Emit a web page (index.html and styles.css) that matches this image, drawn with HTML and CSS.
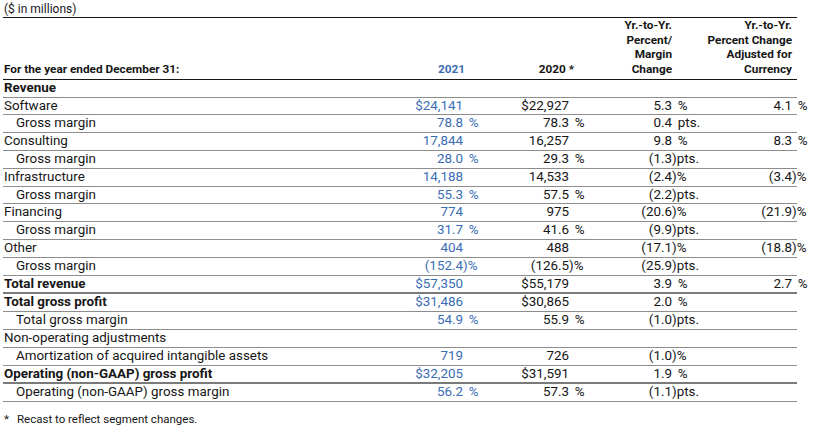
FILE: index.html
```html
<!DOCTYPE html>
<html lang="en">
<head>
<meta charset="utf-8">
<title>Gross profit by segment</title>
<link rel="stylesheet" href="styles.css">
</head>
<body>
<div class="page">
  <div class="units">($ in millions)</div>
  <table class="fin">
    <colgroup>
      <col class="c-label"><col class="c-v1"><col class="c-s1"><col class="c-v2"><col class="c-s2"><col class="c-v3"><col class="c-s3"><col class="c-v4"><col class="c-s4">
    </colgroup>
    <thead>
      <tr class="head">
        <th class="h-label">For the year ended December 31:</th>
        <th class="h-num h-2021" colspan="2">2021</th>
        <th class="h-num h-2020" colspan="2">2020 *</th>
        <th class="h-num h-pct" colspan="2">Yr.-to-Yr.<br>Percent/<br>Margin<br>Change</th>
        <th class="h-num h-cur" colspan="2">Yr.-to-Yr.<br>Percent Change<br>Adjusted for<br>Currency</th>
      </tr>
    </thead>
    <tbody>
      <tr><td class="lbl b sect">Revenue</td><td></td><td></td><td></td><td></td><td></td><td></td><td></td><td></td></tr>
      <tr><td class="lbl">Software</td><td class="v cy">$24,141</td><td class="s"></td><td class="v">$22,927</td><td class="s"></td><td class="v">5.3</td><td class="s sp">&nbsp;%</td><td class="v">4.1</td><td class="s sp">&nbsp;%</td></tr>
      <tr><td class="lbl in">Gross margin</td><td class="v cy">78.8</td><td class="s sp cy">&nbsp;%</td><td class="v">78.3</td><td class="s sp">&nbsp;%</td><td class="v">0.4</td><td class="s sp">&nbsp;pts.</td><td class="v"></td><td class="s"></td></tr>
      <tr><td class="lbl">Consulting</td><td class="v cy">17,844</td><td class="s"></td><td class="v">16,257</td><td class="s"></td><td class="v">9.8</td><td class="s sp">&nbsp;%</td><td class="v">8.3</td><td class="s sp">&nbsp;%</td></tr>
      <tr><td class="lbl in">Gross margin</td><td class="v cy">28.0</td><td class="s sp cy">&nbsp;%</td><td class="v">29.3</td><td class="s sp">&nbsp;%</td><td class="v">(1.3</td><td class="s">)pts.</td><td class="v"></td><td class="s"></td></tr>
      <tr><td class="lbl">Infrastructure</td><td class="v cy">14,188</td><td class="s"></td><td class="v">14,533</td><td class="s"></td><td class="v">(2.4</td><td class="s">)%</td><td class="v">(3.4</td><td class="s">)%</td></tr>
      <tr><td class="lbl in">Gross margin</td><td class="v cy">55.3</td><td class="s sp cy">&nbsp;%</td><td class="v">57.5</td><td class="s sp">&nbsp;%</td><td class="v">(2.2</td><td class="s">)pts.</td><td class="v"></td><td class="s"></td></tr>
      <tr><td class="lbl">Financing</td><td class="v cy">774</td><td class="s"></td><td class="v">975</td><td class="s"></td><td class="v">(20.6</td><td class="s">)%</td><td class="v">(21.9</td><td class="s">)%</td></tr>
      <tr><td class="lbl in">Gross margin</td><td class="v cy">31.7</td><td class="s sp cy">&nbsp;%</td><td class="v">41.6</td><td class="s sp">&nbsp;%</td><td class="v">(9.9</td><td class="s">)pts.</td><td class="v"></td><td class="s"></td></tr>
      <tr><td class="lbl">Other</td><td class="v cy">404</td><td class="s"></td><td class="v">488</td><td class="s"></td><td class="v">(17.1</td><td class="s">)%</td><td class="v">(18.8</td><td class="s">)%</td></tr>
      <tr><td class="lbl in">Gross margin</td><td class="v cy">(152.4</td><td class="s cy">)%</td><td class="v">(126.5</td><td class="s">)%</td><td class="v">(25.9</td><td class="s">)pts.</td><td class="v"></td><td class="s"></td></tr>
      <tr class="thick"><td class="lbl b">Total revenue</td><td class="v cy">$57,350</td><td class="s"></td><td class="v">$55,179</td><td class="s"></td><td class="v">3.9</td><td class="s sp">&nbsp;%</td><td class="v">2.7</td><td class="s sp">&nbsp;%</td></tr>
      <tr><td class="lbl b">Total gross profit</td><td class="v cy">$31,486</td><td class="s"></td><td class="v">$30,865</td><td class="s"></td><td class="v">2.0</td><td class="s sp">&nbsp;%</td><td class="v"></td><td class="s"></td></tr>
      <tr><td class="lbl in">Total gross margin</td><td class="v cy">54.9</td><td class="s sp cy">&nbsp;%</td><td class="v">55.9</td><td class="s sp">&nbsp;%</td><td class="v">(1.0</td><td class="s">)pts.</td><td class="v"></td><td class="s"></td></tr>
      <tr><td class="lbl">Non-operating adjustments</td><td class="v"></td><td class="s"></td><td class="v"></td><td class="s"></td><td class="v"></td><td class="s"></td><td class="v"></td><td class="s"></td></tr>
      <tr><td class="lbl in">Amortization of acquired intangible assets</td><td class="v cy">719</td><td class="s"></td><td class="v">726</td><td class="s"></td><td class="v">(1.0</td><td class="s">)%</td><td class="v"></td><td class="s"></td></tr>
      <tr class="thick"><td class="lbl b">Operating (non-GAAP) gross profit</td><td class="v cy">$32,205</td><td class="s"></td><td class="v">$31,591</td><td class="s"></td><td class="v">1.9</td><td class="s sp">&nbsp;%</td><td class="v"></td><td class="s"></td></tr>
      <tr><td class="lbl in">Operating (non-GAAP) gross margin</td><td class="v cy">56.2</td><td class="s sp cy">&nbsp;%</td><td class="v">57.3</td><td class="s sp">&nbsp;%</td><td class="v">(1.1</td><td class="s">)pts.</td><td class="v"></td><td class="s"></td></tr>
    </tbody>
  </table>
  <div class="note"><span class="star">*</span><span>Recast to reflect segment changes.</span></div>
</div>
</body>
</html>
```

FILE: styles.css
```css
html, body {
  margin: 0;
  padding: 0;
  background: #ffffff;
}

body {
  font-family: Roboto, "Liberation Sans", Arial, sans-serif;
  color: #161616;
}

.page {
  width: 794px;
  margin-left: 3px;
}

.units {
  font-size: 12px;
  line-height: 19px;
  height: 18px;
  padding-left: 1px;
  border-bottom: 1px solid #161616;
  box-sizing: border-box;
}

.fin {
  width: 794px;
  table-layout: fixed;
  border-collapse: separate;
  border-spacing: 0;
}

.c-label { width: 377px; }
.c-v1 { width: 83px; }
.c-s1 { width: 20px; }
.c-v2 { width: 86px; }
.c-s2 { width: 21px; }
.c-v3 { width: 82px; }
.c-s3 { width: 33px; }
.c-v4 { width: 87px; }
.c-s4 { width: 5px; }

.head {
  height: 60px;
}

.head th {
  font-size: 11.8px;
  font-weight: 700;
  line-height: 14.7px;
  vertical-align: bottom;
  padding: 0 0 2px 0;
  border-bottom: 1px solid #161616;
  white-space: nowrap;
}

.h-label {
  text-align: left;
  padding-left: 1px !important;
}

.h-num { text-align: right; }
.h-2021 { padding-right: 18px !important; color: #3a6db5; }
.h-2020 { padding-right: 16px !important; }
.h-pct { padding-right: 33px !important; }
.h-cur { padding-right: 5px !important; }

.fin td {
  font-size: 13.4px;
  line-height: 16.8px;
  padding: 0;
  border-bottom: 1px solid #8d8d8d;
  white-space: nowrap;
  overflow: visible;
}

.fin tr.thick td {
  border-bottom: 2px solid #7a7a7a;
}

.lbl {
  text-align: left;
  padding-left: 1px !important;
}

.lbl.in { padding-left: 13px !important; }
.b { font-weight: 700; }

.v { text-align: right; }
.s { text-align: left; }
.fin td.sp { padding-left: 2.5px; }
.cy { color: #3a6db5; }

.note {
  margin-top: 10px;
  font-size: 11.5px;
  line-height: 14px;
  display: flex;
  padding-left: 1px;
}

.star {
  width: 13px;
}
```
